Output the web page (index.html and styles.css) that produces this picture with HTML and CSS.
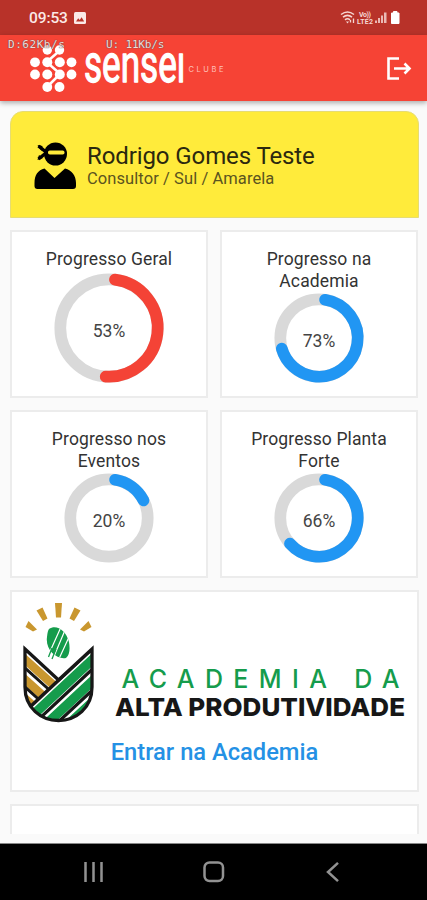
FILE: index.html
```
<!DOCTYPE html>
<html lang="pt-BR">
<head>
<meta charset="utf-8">
<meta name="viewport" content="width=device-width, initial-scale=1">
<title>Sensei Clube</title>
<link rel="stylesheet" href="styles.css">
</head>
<body>
<div class="status-bar">
  <span class="clock">09:53</span>
  <svg class="status-photo" width="12" height="12" viewBox="0 0 12 12"><rect width="12" height="12" rx="1.5" fill="#fbe9e7"/><path d="M2 9.5 4.2 6.3 5.7 8 7.6 5.2 10.2 9.5Z" fill="#b83229"/></svg>
  <svg class="status-icons" width="62" height="16" viewBox="340 10 62 16">
    <g fill="none" stroke="#f6d6d2" stroke-width="1.5">
      <path d="M341 14.5Q347.500 9.500 354 14.500M343 17.200Q347.500 13.500 352 17.200M345 19.800Q347.500 17.800 350 19.800"/>
      <path d="M350.500 22.500V20M353.500 23V18.500" stroke-width="1.300"/>
    </g>
    <path d="M346 21.500h3l-1.500 2z" fill="#f6d6d2"/>
    <text x="359" y="16.500" class="tiny" textLength="12">Vo))</text>
    <text x="357" y="23.500" class="tiny" textLength="16">LTE2</text>
    <g fill="#eab9b4"><rect x="375" y="20.500" width="2" height="2.500"/><rect x="378" y="18" width="2" height="5"/><rect x="381" y="15.500" width="2" height="7.500"/><rect x="384" y="12.500" width="2.500" height="10.500"/></g>
    <path d="M391.500 13h2v-1.500h3.500v1.500h2v10.500h-7.500z" fill="#fff" stroke="#fff" stroke-linejoin="round"/>
  </svg>
</div>
<header class="app-bar">
  <svg class="brand" width="200" height="60" viewBox="26 38 200 60">
    <g fill="#fff">
      <circle cx="47.300" cy="50" r="4.700"/><circle cx="59.500" cy="50" r="4.700"/>
      <circle cx="35" cy="62.300" r="4.900"/><circle cx="47.300" cy="62.300" r="5"/><circle cx="59.800" cy="62.300" r="5"/><circle cx="71.500" cy="62.300" r="4.900"/>
      <circle cx="35" cy="74.500" r="4.900"/><circle cx="47.300" cy="74.500" r="5"/><circle cx="59.800" cy="74.500" r="5"/><circle cx="71.500" cy="74.500" r="4.900"/>
      <circle cx="47.300" cy="87" r="4.900"/><circle cx="59.500" cy="87" r="4.900"/>
    </g>
    <path d="M57 53 49 60M50 65 58 72M57 77 50 84" fill="none" stroke="#fff" stroke-width="2.500"/>
    <text class="wordmark" transform="translate(84 82.300) scale(.7 1)" textLength="145" lengthAdjust="spacingAndGlyphs">senseı</text>
    <text class="sub-brand" x="188.500" y="71.500" textLength="35">CLUBE</text>
  </svg>
  <svg class="logout" width="26" height="24" viewBox="386 56 26 24"><path d="M399 58.500H388.500V78.500H399M394 68.500H409M404.500 63.500 409.500 68.500 404.500 73.500" fill="none" stroke="#fff" stroke-width="2.600"/></svg>
  <span class="speed down">D:62Kb/s</span>
  <span class="speed up">U: 11Kb/s</span>
</header>
<main class="content">
  <section class="profile">
    <svg class="ninja" width="44" height="50" viewBox="33 139 44 50">
      <circle cx="55.500" cy="153" r="11.500"/>
      <path d="M46 151 38.500 145M46 152 38.500 158" stroke="#000" stroke-width="3.500"/>
      <path d="M37.500 144l5 1-1 5zM37.500 159l1.500-5 4 3z"/>
      <rect x="48" y="149.500" width="16.500" height="4" rx="1.800" fill="#ffeb3b"/>
      <path d="M44.500 167.500 54.500 177 65 167.500C72 169 76 175 76 182V185Q76 188 73 188H37.500Q34.500 188 34.500 185V182C34.500 174 38 169 44.500 167.500Z"/>
    </svg>
    <div>
      <h1 class="name">Rodrigo Gomes Teste</h1>
      <p class="role">Consultor / Sul / Amarela</p>
    </div>
  </section>
  <section class="grid">
    <article class="card stat">
      <h2 class="title">Progresso Geral</h2>
      <div class="ring big"><svg viewBox="0 0 110 110"><circle class="track" cx="55" cy="55" r="48.700"/><circle class="value red" cx="55" cy="55" r="48.700" pathLength="360" stroke-dasharray="176.800 360" transform="rotate(-83 55 55)"/></svg><span>53%</span></div>
    </article>
    <article class="card stat">
      <h2 class="title">Progresso na<br>Academia</h2>
      <div class="ring"><svg viewBox="0 0 90 90"><circle class="track" cx="45" cy="45" r="38.700"/><circle class="value" cx="45" cy="45" r="38.700" pathLength="360" stroke-dasharray="245 360" transform="rotate(-81 45 45)"/></svg><span>73%</span></div>
    </article>
    <article class="card stat">
      <h2 class="title">Progresso nos<br>Eventos</h2>
      <div class="ring"><svg viewBox="0 0 90 90"><circle class="track" cx="45" cy="45" r="38.700"/><circle class="value" cx="45" cy="45" r="38.700" pathLength="360" stroke-dasharray="54 360" transform="rotate(-81 45 45)"/></svg><span>20%</span></div>
    </article>
    <article class="card stat">
      <h2 class="title">Progresso Planta<br>Forte</h2>
      <div class="ring"><svg viewBox="0 0 90 90"><circle class="track" cx="45" cy="45" r="38.700"/><circle class="value" cx="45" cy="45" r="38.700" pathLength="360" stroke-dasharray="219.600 360" transform="rotate(-81 45 45)"/></svg><span>66%</span></div>
    </article>
  </section>
  <section class="card academy">
    <svg class="academy-logo" width="405" height="140" viewBox="12 592 405 140">
      <defs>
        <clipPath id="shield"><path d="M25 649 58.500 680 92 649V687C92 708 76 720.500 58.500 720.500S25 708 25 687Z"/></clipPath>
        <clipPath id="leaf"><path d="M49 629C56 624 66 630 69 642Q71 654 66 658C57 660 45 650 47 637Q47.500 631 49 629Z"/></clipPath>
      </defs>
      <g fill="#c9972f">
        <path d="M55 603h7l-1 14.500h-5z"/>
        <path d="M36.500 610.500 42.500 607.500 47.500 618.500 43 621Z"/><path d="M80.500 610.500 74.500 607.500 69.500 618.500 74 621Z"/>
        <path d="M28.500 621 25.500 627 33 631.500 37 629.500Z"/><path d="M88.500 621 91.500 627 84 631.500 80 629.500Z"/>
      </g>
      <g clip-path="url(#leaf)"><path d="M44 625h28v36H44z" fill="#159c4c"/><path d="M61 627 48 656M65.500 629 52 661M69 637 58 661" stroke="#fff" stroke-width="1.200"/></g>
      <path d="M52 648 48.500 657M56 649 52 659" stroke="#159c4c" stroke-width="1.300"/>
      <g clip-path="url(#shield)">
        <path d="M20 640h80v84H20z" fill="#fff"/>
        <path d="M20 655 60 691M20 675 50 702M20 694 45 716.500" stroke="#c9972f" stroke-width="8.500"/>
        <path d="M20 663.500 55 695M20 682.500 45 705" stroke="#171717" stroke-width="3"/>
        <path d="M100 642 25 712V740H100Z" fill="#fff"/>
        <path d="M100 652.500 25 722.500M100 674 25 744M100 695 25 765" stroke="#159c4c" stroke-width="9.500"/>
        <path d="M100 662 25 732M100 683 25 753" stroke="#171717" stroke-width="3.200"/>
        <path d="M94 647 30 707" stroke="#171717" stroke-width="3.500"/>
      </g>
      <path d="M25 649 58.500 680 92 649V687C92 708 76 720.500 58.500 720.500S25 708 25 687Z" fill="none" stroke="#171717" stroke-width="3.300"/>
      <text class="logo-top" x="121.500" y="688" textLength="278">ACADEMIA DA</text>
      <text class="logo-bottom" x="115" y="715.500" textLength="290" lengthAdjust="spacingAndGlyphs">ALTA PRODUTIVIDADE</text>
    </svg>
    <a class="enter">Entrar na Academia</a>
  </section>
  <section class="card next"></section>
</main>
<nav class="nav-bar">
  <svg width="20" height="20" viewBox="0 0 20 20"><path d="M1.500 0V20M9.500 0V20M17.500 0V20"/></svg>
  <svg class="home" width="22" height="22" viewBox="0 0 22 22"><rect x="1.500" y="1.500" width="18.500" height="18.500" rx="5"/></svg>
  <svg width="14" height="20" viewBox="0 0 14 20"><path d="M12 .8 2 10 12 19.200"/></svg>
</nav>
</body>
</html>
```
FILE: styles.css
```
* { box-sizing: border-box; margin: 0; padding: 0; }
body {
  width: 427px; height: 900px; overflow: hidden;
  display: flex; flex-direction: column;
  background: #fafafa; color: #333;
  font-family: Roboto, "Liberation Sans", sans-serif;
}
svg { display: block; overflow: visible; }
.status-bar {
  height: 35px; flex: none; display: flex; align-items: center;
  padding: 1px 25px 0 29px; background: #b83229; color: #fbe9e7;
}
.clock { font-size: 15.5px; font-weight: 500; letter-spacing: -.1px; }
.status-photo { margin-left: 6px; }
.status-icons { margin-left: auto; }
.tiny { font-size: 7px; font-weight: 700; fill: #f6d6d2; }
.app-bar {
  position: relative; z-index: 1; height: 66px; flex: none;
  display: flex; align-items: center; justify-content: space-between;
  padding: 0 15px 0 26px; background: #f64335;
  box-shadow: 0 2px 5px rgba(0, 0, 0, .32);
}
.wordmark { font-size: 51px; font-weight: 400; fill: #fff; stroke: #fff; stroke-width: 1.3px; stroke-linejoin: round; }
.sub-brand { font: 7.5px Inter, sans-serif; fill: #ffc0b8; }
.speed {
  position: absolute; top: 3px;
  font: 11px/13px "DejaVu Sans Mono", monospace; color: #f7d9d5;
  text-shadow: 0 0 1px #555, 0 0 1px #555;
}
.down { left: 8px; letter-spacing: .55px; }
.up { left: 106px; letter-spacing: -.15px; white-space: pre; }
.content { flex: 1; display: flex; flex-direction: column; gap: 12px; padding: 10px 8px 0 10px; }
.profile {
  height: 107px; flex: none; display: flex; align-items: center;
  padding: 0 23px 0 22px; background: #ffeb3b;
  border: 1px solid #e6dc72; border-radius: 13px 13px 0 0;
}
.ninja { margin-right: 10px; }
.name { font-size: 24px; line-height: 27px; font-weight: 400; letter-spacing: -.1px; color: #2b280f; white-space: nowrap; }
.role { font-size: 16.500px; line-height: 18px; letter-spacing: .08px; color: #5b5420; white-space: nowrap; }
.profile > div { padding-top: 1px; }
.grid { display: grid; grid-template-columns: 198px 198px; gap: 12px; grid-auto-rows: 168px; }
.card { background: #fff; border: 2px solid #ececec; }
.stat { display: flex; flex-direction: column; align-items: center; padding-top: 17px; }
.title { font-size: 17.500px; line-height: 21.500px; font-weight: 400; letter-spacing: .12px; text-align: center; color: #333; white-space: nowrap; }
.ring { position: relative; width: 90px; height: 90px; display: grid; place-items: center; margin-top: 1px; }
.ring.big { width: 110px; height: 110px; margin-top: 2px; }
.ring svg { grid-area: 1 / 1; width: 100%; height: 100%; }
.ring span { grid-area: 1 / 1; font-size: 17.500px; padding-top: 6px; color: #444; }
.track, .value { fill: none; stroke-width: 11.700px; }
.track { stroke: #d9d9d9; }
.value { stroke: #2196f3; stroke-linecap: round; }
.red { stroke: #f44336; }
.academy { height: 202px; flex: none; display: flex; flex-direction: column; align-items: center; }
.logo-top { font: 500 25px Inter, sans-serif; fill: #159c4c; }
.logo-bottom { font: 800 25px Inter, sans-serif; fill: #171717; }
.enter { margin-top: 6px; font-size: 23.700px; line-height: 28px; font-weight: 500; color: #2491e5; }
.next { height: 30px; flex: none; border-bottom: 0; }
.nav-bar {
  height: 57px; flex: none; display: flex; align-items: center; justify-content: space-between;
  padding: 0 87px 0 84px; background: #000; border-top: 1px solid #888;
}
.nav-bar svg { fill: none; stroke: #929292; stroke-width: 2.500px; }
.nav-bar .home { margin-right: 3px; }
```
